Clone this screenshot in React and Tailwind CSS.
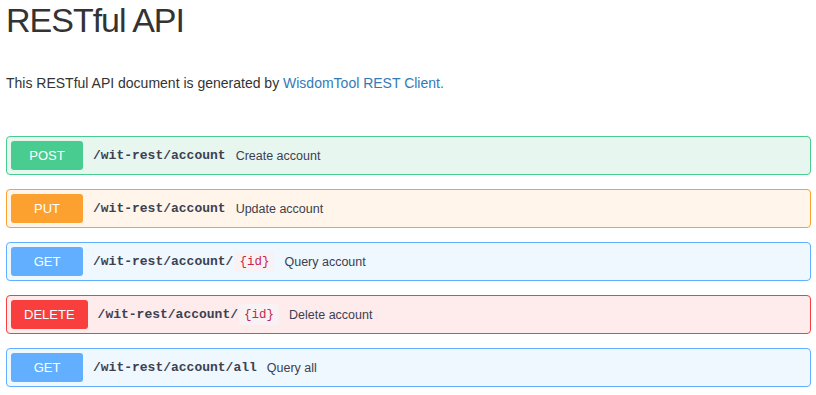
const endpoints = [
  { method: "POST", path: "/wit-rest/account", desc: "Create account", theme: "post" },
  { method: "PUT", path: "/wit-rest/account", desc: "Update account", theme: "put" },
  { method: "GET", path: "/wit-rest/account/", param: "{id}", desc: "Query account", theme: "get" },
  { method: "DELETE", path: "/wit-rest/account/", param: "{id}", desc: "Delete account", theme: "delete" },
  { method: "GET", path: "/wit-rest/account/all", desc: "Query all", theme: "get" },
];

const themes = {
  post: { box: "border-[#49cc90] bg-[#e8f6f0]", badge: "bg-[#49cc90]" },
  put: { box: "border-[#fca130] bg-[#fff5ea]", badge: "bg-[#fca130]" },
  get: { box: "border-[#61affe] bg-[#eff7ff]", badge: "bg-[#61affe]" },
  delete: { box: "border-[#f93e3e] bg-[#feebeb]", badge: "bg-[#f93e3e]" },
};

const Endpoint = ({ item }) => {
  const t = themes[item.theme];
  return (
    <div className={`flex items-center border rounded-[4px] p-[4px] ${t.box}`}>
      <span className={`min-w-[72px] h-[29px] px-[13px] flex items-center justify-center rounded-[3px] text-white text-[13px] ${t.badge}`}>
        {item.method}
      </span>
      <span className="ml-[10px] flex items-center text-[#3b4151] font-bold text-[13px] font-['Liberation_Mono',monospace]">
        {item.path}
        {item.param && (
          <code className="ml-[1px] px-[5px] h-[21px] flex items-center rounded-[4px] bg-[#f9f2f4] text-[#c7254e] font-normal text-[12.5px]">
            {item.param}
          </code>
        )}
      </span>
      <span className="ml-[10px] text-[12.5px] text-[#3b4151]">{item.desc}</span>
    </div>
  );
};

export default function App() {
  return (
    <div className="bg-white min-h-[395px] pl-[6px] pr-[5px] font-['Liberation_Sans',Arial,sans-serif] text-[#333]">
      <h1 className="pt-[2px] text-[34px] leading-[1.1] tracking-[-1px]">RESTful API</h1>
      <p className="mt-[34px] text-[14px] leading-[20px]">
        This RESTful API document is generated by{" "}
        <a className="text-[#337ab7]">WisdomTool REST Client.</a>
      </p>
      <div className="mt-[43px] flex flex-col gap-[14px]">
        {endpoints.map((e, i) => (
          <Endpoint key={i} item={e} />
        ))}
      </div>
    </div>
  );
}
